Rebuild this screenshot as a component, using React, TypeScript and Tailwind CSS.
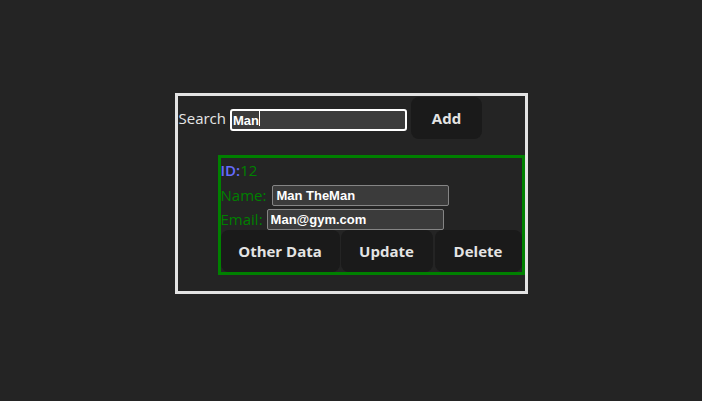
import React from 'react';

const font = { fontFamily: '"Open Sans", "Noto Sans", sans-serif' };
const inputFont = { fontFamily: '"Liberation Sans", Arial, sans-serif' };

function Btn({ label, w }: { label: string; w: string }) {
    return (
        <button
            className={`h-[42px] ${w} shrink-0 rounded-lg bg-[#1a1a1a] text-[15px] font-bold text-[#e4e4e4]`}
            style={font}
        >
            {label}
        </button>
    );
}

export default function App() {
    return (
        <div className="min-h-screen bg-[#242424] flex justify-center pt-[93px]" style={font}>
            <div className="w-[353px] h-[201px] border-[3px] border-[#e3e3e3] flex flex-col">
                <div className="flex items-center h-[43px] pt-px">
                    <span className="ml-px text-[15px] text-[#e6e6e6] leading-none">Search</span>
                    <div className="relative ml-[4px] mt-[2px]">
                        <input
                            className="w-[177px] h-[22px] rounded-[3px] border-2 border-white bg-[#3b3b3b] px-[1px] text-[13px] font-bold text-white outline-none"
                            style={inputFont}
                            defaultValue="Man"
                        />
                        <span className="absolute left-[29px] top-[4px] h-[15px] w-px bg-white" />
                    </div>
                    <div className="ml-[4px]">
                        <Btn label="Add" w="w-[71px]" />
                    </div>
                </div>
                <div className="mt-[16px] ml-10 border-[3px] border-[#008000] flex flex-col">
                    <div className="h-6 flex items-center text-[15px] leading-none">
                        <span className="text-[#646cff] font-semibold">ID:</span>
                        <span className="text-[#008000]">12</span>
                    </div>
                    <div className="h-[26px] flex items-start text-[15px] text-[#008000]">
                        <span className="mt-[2px] leading-[22px]">Name:</span>
                        <input
                            className="ml-[6px] mt-[3px] w-[177px] h-[21px] rounded-[2px] border border-[#858585] bg-[#3b3b3b] px-[3px] text-[13px] font-bold text-white outline-none"
                            style={inputFont}
                            defaultValue="Man TheMan"
                        />
                    </div>
                    <div className="h-[22px] flex items-start text-[15px] text-[#008000]">
                        <span className="leading-[22px]">Email:</span>
                        <input
                            className="ml-[4px] mt-px w-[177px] h-[21px] rounded-[2px] border border-[#858585] bg-[#3b3b3b] px-[3px] text-[13px] font-bold text-white outline-none"
                            style={inputFont}
                            defaultValue="Man@gym.com"
                        />
                    </div>
                    <div className="flex">
                        <Btn label="Other Data" w="w-[119px]" />
                        <div className="w-px" />
                        <Btn label="Update" w="w-[92px]" />
                        <div className="w-[2px]" />
                        <Btn label="Delete" w="w-[87px]" />
                    </div>
                </div>
            </div>
        </div>
    );
}
